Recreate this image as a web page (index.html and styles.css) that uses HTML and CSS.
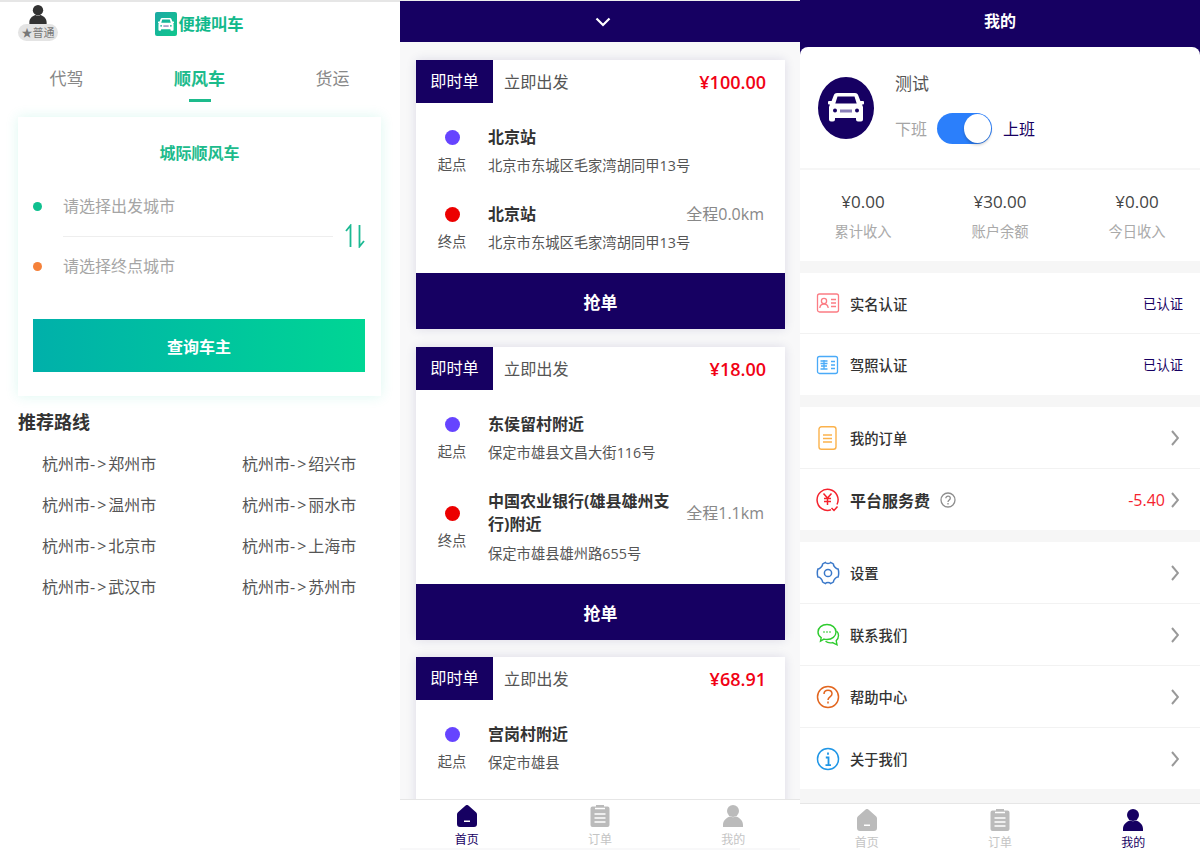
FILE: index.html
```html
<!DOCTYPE html>
<html lang="zh-CN">
<head>
  <meta charset="UTF-8" />
  <meta name="viewport" content="width=device-width, initial-scale=1.0"/>
  <title>便捷叫车</title>
  <link rel="stylesheet" href="styles.css">
</head>
<body>

  <svg class="defs" width="0" height="0">
    <symbol id="i-home" viewBox="0 0 20 22">
      <path d="M8.6 .6a2 2 0 0 1 2.8 0l7.6 6.6a3 3 0 0 1 1 2.2V19a3 3 0 0 1-3 3H3a3 3 0 0 1-3-3V9.400a3 3 0 0 1 1-2.200z"/>
      <rect x="7" y="15.500" width="6" height="1.500" fill="#fff"/>
    </symbol>
    <symbol id="i-list" viewBox="0 0 20 22">
      <path d="M6 1.500V0h8v1.500h3.500A2 2 0 0 1 19.500 3.500V20a2 2 0 0 1-2 2h-15a2 2 0 0 1-2-2V3.500a2 2 0 0 1 2-2z"/>
      <path d="M5 3.500h10M4.500 9h11M4.500 13h11M4.500 17h11" stroke="#fff" stroke-width="1.600" fill="none"/>
    </symbol>
    <symbol id="i-user" viewBox="0 0 20 22">
      <circle cx="10" cy="6" r="6"/>
      <path d="M7 11.500C3 13 0 15.500 0 20v2h20v-2c0-4.500-3-7-7-8.500-1.800 1-4.200 1-6 0z"/>
    </symbol>
    <symbol id="i-chevron" viewBox="0 0 8 16">
      <path d="M1 1l6 7-6 7" fill="none" stroke="currentColor" stroke-width="2"/>
    </symbol>
    <symbol id="i-car" viewBox="0 0 36 29">
      <path fill-rule="evenodd" d="M9 0h18c1.500 0 2.600.8 3.200 2.300L32.400 8H35a1 1 0 0 1 1 1v1.500a1 1 0 0 1-1 1h-1l1 2.500v12.500a2 2 0 0 1-2 2h-3a2 2 0 0 1-2-2V25H7v1.500a2 2 0 0 1-2 2H3a2 2 0 0 1-2-2V14l1-2.500H1a1 1 0 0 1-1-1V9a1 1 0 0 1 1-1h2.600l2.200-5.700C6.400.8 7.500 0 9 0zM9.500 3.500L7.300 10.500h21.400L26.500 3.500zM7 15.500a2 2 0 1 0 0 4 2 2 0 0 0 0-4zm22 0a2 2 0 1 0 0 4 2 2 0 0 0 0-4z"/>
      <rect x="12" y="16.500" width="12" height="3" fill="#8a80b8"/>
    </symbol>
  </svg>

  <main class="board">

    <!-- 首页 -->
    <section class="screen screen-home">
      <header class="home-top">
        <div class="member">
          <svg class="member-icon"><use href="#i-user"/></svg>
          <span class="member-badge">★普通</span>
        </div>
        <div class="logo">
          <span class="logo-mark"><svg width="16" height="13"><use href="#i-car"/></svg></span>
          便捷叫车
        </div>
      </header>

      <nav class="tabs">
        <a href="#">代驾</a>
        <a href="#" class="active">顺风车</a>
        <a href="#">货运</a>
      </nav>

      <div class="search-card">
        <h2>城际顺风车</h2>
        <div class="search-fields">
          <div class="fields">
            <div class="field"><i class="dot-start"></i><span>请选择出发城市</span></div>
            <div class="field"><i class="dot-end"></i><span>请选择终点城市</span></div>
          </div>
          <svg class="swap" width="20" height="24" viewBox="0 0 20 24">
            <path d="M1 7l4.500-5.500V23M19 17l-4.500 5.500V1" fill="none" stroke="#1cb993" stroke-width="1.800"/>
          </svg>
        </div>
        <button class="search-btn">查询车主</button>
      </div>

      <h3 class="routes-title">推荐路线</h3>
      <div class="routes">
        <span>杭州市<i>-&gt;</i>郑州市</span><span>杭州市<i>-&gt;</i>绍兴市</span>
        <span>杭州市<i>-&gt;</i>温州市</span><span>杭州市<i>-&gt;</i>丽水市</span>
        <span>杭州市<i>-&gt;</i>北京市</span><span>杭州市<i>-&gt;</i>上海市</span>
        <span>杭州市<i>-&gt;</i>武汉市</span><span>杭州市<i>-&gt;</i>苏州市</span>
      </div>
    </section>

    <!-- 订单大厅 -->
    <section class="screen screen-orders">
      <header class="orders-top">
        <svg width="16" height="10" viewBox="0 0 16 10"><path d="M1.500 1.500L8 8l6.500-6.500" fill="none" stroke="#fff" stroke-width="2.200"/></svg>
      </header>

      <div class="order-list">
        <article class="order">
          <div class="order-head">
            <span class="order-tag">即时单</span>
            <span class="order-when">立即出发</span>
            <span class="order-price">¥100.00</span>
          </div>
          <div class="order-stops">
            <div class="stop">
              <div class="stop-mark"><i class="mark-start"></i>起点</div>
              <div class="stop-info">
                <div class="stop-line"><b>北京站</b></div>
                <p>北京市东城区毛家湾胡同甲13号</p>
              </div>
            </div>
            <div class="stop">
              <div class="stop-mark"><i class="mark-end"></i>终点</div>
              <div class="stop-info">
                <div class="stop-line"><b>北京站</b><em>全程0.0km</em></div>
                <p>北京市东城区毛家湾胡同甲13号</p>
              </div>
            </div>
          </div>
          <button class="grab-btn">抢单</button>
        </article>

        <article class="order">
          <div class="order-head">
            <span class="order-tag">即时单</span>
            <span class="order-when">立即出发</span>
            <span class="order-price">¥18.00</span>
          </div>
          <div class="order-stops">
            <div class="stop">
              <div class="stop-mark"><i class="mark-start"></i>起点</div>
              <div class="stop-info">
                <div class="stop-line"><b>东侯留村附近</b></div>
                <p>保定市雄县文昌大街116号</p>
              </div>
            </div>
            <div class="stop">
              <div class="stop-mark"><i class="mark-end"></i>终点</div>
              <div class="stop-info">
                <div class="stop-line"><b>中国农业银行(雄县雄州支行)附近</b><em>全程1.1km</em></div>
                <p class="addr-low">保定市雄县雄州路655号</p>
              </div>
            </div>
          </div>
          <button class="grab-btn">抢单</button>
        </article>

        <article class="order order-last">
          <div class="order-head">
            <span class="order-tag">即时单</span>
            <span class="order-when">立即出发</span>
            <span class="order-price">¥68.91</span>
          </div>
          <div class="order-stops">
            <div class="stop">
              <div class="stop-mark"><i class="mark-start"></i>起点</div>
              <div class="stop-info">
                <div class="stop-line"><b>宫岗村附近</b></div>
                <p>保定市雄县</p>
              </div>
            </div>
          </div>
        </article>
      </div>

      <nav class="tabbar">
        <a href="#" class="on"><svg><use href="#i-home"/></svg>首页</a>
        <a href="#"><svg><use href="#i-list"/></svg>订单</a>
        <a href="#"><svg><use href="#i-user"/></svg>我的</a>
      </nav>
    </section>

    <!-- 我的 -->
    <section class="screen screen-me">
      <div class="me-top">
        <h1>我的</h1>
        <div class="profile">
          <div class="avatar"><svg width="36" height="29"><use href="#i-car"/></svg></div>
          <div class="profile-info">
            <div class="profile-name">测试</div>
            <div class="duty">
              <span>下班</span>
              <span class="toggle"><i></i></span>
              <span class="duty-on">上班</span>
            </div>
          </div>
        </div>
      </div>

      <div class="stats">
        <div><strong>¥0.00</strong><span>累计收入</span></div>
        <div><strong>¥30.00</strong><span>账户余额</span></div>
        <div><strong>¥0.00</strong><span>今日收入</span></div>
      </div>

      <div class="menu-group menu-verify">
        <a class="menu-row" href="#">
          <svg class="menu-icon" viewBox="0 0 24 24" fill="none" stroke="#fb7c84" stroke-width="1.300">
            <rect x="1.500" y="3" width="21" height="18" rx="2"/>
            <circle cx="8" cy="10" r="2.600"/>
            <path d="M3.800 17c.3-2.800 2-4 4.200-4s3.900 1.200 4.200 4M15 8.500h5M15 12h5M15 15.500h5"/>
          </svg>
          <span class="menu-label">实名认证</span>
          <span class="menu-state">已认证</span>
        </a>
        <a class="menu-row" href="#">
          <svg class="menu-icon" viewBox="0 0 24 24" fill="none" stroke="#4aaaf8" stroke-width="1.300">
            <rect x="1.500" y="3.500" width="20" height="17" rx="2"/>
            <path d="M4.500 8h7M4.500 10.500h7M5 13h6M4.500 16h7M8 7v9M15 8.500h4M15 12h4M15 15.500h4"/>
          </svg>
          <span class="menu-label">驾照认证</span>
          <span class="menu-state">已认证</span>
        </a>
      </div>

      <div class="menu-group menu-money">
        <a class="menu-row" href="#">
          <svg class="menu-icon" viewBox="0 0 24 24" fill="none" stroke="#fbb24c" stroke-width="1.400">
            <rect x="3" y="0.800" width="17" height="22.500" rx="2.500"/>
            <path d="M7 9h9M7 12.500h9M7 16h9"/>
          </svg>
          <span class="menu-label">我的订单</span>
          <svg class="chevron"><use href="#i-chevron"/></svg>
        </a>
        <a class="menu-row" href="#">
          <svg class="menu-icon" viewBox="0 0 24 24" fill="none" stroke="#f5222d" stroke-width="1.500">
            <path d="M15 21.800A10.500 10.500 0 1 1 21 16.500"/>
            <path d="M7.500 5.500L11.500 10l4-4.500M11.500 10v7M8 10.500h7M8 13.500h7M15.500 20l2.500 2.500 3.500-4"/>
          </svg>
          <span class="menu-label menu-label-strong">平台服务费</span>
          <svg class="hint" viewBox="0 0 16 16" fill="none" stroke="#8e8e8e" stroke-width="1.300">
            <circle cx="8" cy="8" r="7"/>
            <path d="M5.800 6.300c0-3 4.500-2.900 4.500-.1 0 1.800-2.300 1.800-2.300 3.700M8 11v1.400"/>
          </svg>
          <span class="menu-fee">-5.40</span>
          <svg class="chevron chevron-near"><use href="#i-chevron"/></svg>
        </a>
      </div>

      <div class="menu-group menu-more">
        <a class="menu-row" href="#">
          <svg class="menu-icon" viewBox="0 0 24 24" fill="none" stroke="#3a78c9" stroke-width="1.500">
            <path d="M9.500 1.500c.8 1.400 4.200 1.400 5 0 1.100.3 2 .8 2.900 1.500-.2 2 2.800 5.300 4.700 5 .4 1.200.6 2.600.6 4s-.2 2.800-.6 4c-1.900-.3-4.900 3-4.700 5-.9.700-1.800 1.200-2.900 1.500-.8-1.400-4.200-1.400-5 0-1.100-.3-2-.8-2.900-1.500.2-2-2.800-5.300-4.700-5C1.500 14.800 1.300 13.400 1.300 12s.2-2.800.6-4c1.900.3 4.900-3 4.700-5 .9-.7 1.800-1.200 2.900-1.500z"/>
            <circle cx="12" cy="12" r="3.600"/>
          </svg>
          <span class="menu-label">设置</span>
          <svg class="chevron"><use href="#i-chevron"/></svg>
        </a>
        <a class="menu-row" href="#">
          <svg class="menu-icon" viewBox="0 0 24 24" fill="none" stroke="#2ecb2e" stroke-width="1.400">
            <path d="M11 1.500c5 0 9 3.200 9 7.500s-4 7.500-9 7.500c-1 0-2 0-3-.4l-3.500 2 .7-3.500C3 13.300 2 11.300 2 9c0-4.300 4-7.500 9-7.500z"/>
            <path d="M20.500 8c1.300 1.200 2 2.800 2 4.600 0 2.300-1 4-2.300 5.200l.8 4-4.500-2.200c-2.500.6-5 .2-7-1.300"/>
            <path d="M7.500 9h1M10.500 9h1M13.500 9h1" stroke-width="1.800"/>
          </svg>
          <span class="menu-label">联系我们</span>
          <svg class="chevron"><use href="#i-chevron"/></svg>
        </a>
        <a class="menu-row" href="#">
          <svg class="menu-icon" viewBox="0 0 24 24" fill="none" stroke="#e2661f" stroke-width="1.500">
            <circle cx="12" cy="12" r="10.500"/>
            <path d="M8 9c0-5.200 8-5 8-.2 0 3.200-4 3-4 6.200M12 16.500v2"/>
          </svg>
          <span class="menu-label">帮助中心</span>
          <svg class="chevron"><use href="#i-chevron"/></svg>
        </a>
        <a class="menu-row" href="#">
          <svg class="menu-icon" viewBox="0 0 24 24" fill="none" stroke="#1f96e6" stroke-width="1.500">
            <circle cx="12" cy="12" r="10.500"/>
            <path d="M12 5.500v2.200M9.800 10.500H12.500v7.500M9.500 18.200h5.500" stroke-width="1.800"/>
          </svg>
          <span class="menu-label">关于我们</span>
          <svg class="chevron"><use href="#i-chevron"/></svg>
        </a>
      </div>

      <nav class="tabbar">
        <a href="#"><svg><use href="#i-home"/></svg>首页</a>
        <a href="#"><svg><use href="#i-list"/></svg>订单</a>
        <a href="#" class="on"><svg><use href="#i-user"/></svg>我的</a>
      </nav>
    </section>

  </main>

</body>
</html>
```

FILE: styles.css
```css
* {
  box-sizing: border-box;
}
body {
  margin: 0;
  font-family: "Open Sans", "Noto Sans CJK SC", sans-serif;
  color: #333;
  background: #fff;
}
a {
  color: inherit;
  text-decoration: none;
}
h1, h2, h3, p {
  margin: 0;
}
em, i {
  font-style: normal;
}
button {
  display: block;
  border: none;
  color: white;
  font-family: inherit;
  font-weight: 700;
}
.defs {
  position: absolute;
}
.board {
  display: grid;
  grid-template-columns: repeat(3, 400px);
  height: 850px;
  overflow: hidden;
}
.screen {
  height: 850px;
  display: flex;
  flex-direction: column;
  overflow: hidden;
}

/* home */
.screen-home {
  border-top: 2px solid #e6e6e6;
}
.home-top {
  display: flex;
  justify-content: center;
  position: relative;
  height: 52px;
  padding: 10px 1px 0 0;
}
.member {
  position: absolute;
  left: 18px;
  top: 3px;
  display: flex;
  flex-direction: column;
  align-items: center;
}
.member-icon {
  width: 18px;
  height: 19px;
  fill: #333;
}
.member-badge {
  width: 40px;
  height: 17px;
  line-height: 17px;
  text-align: center;
  font-size: 11px;
  color: #777;
  background: #e4e4e4;
  border-radius: 9px;
}
.logo {
  display: flex;
  align-items: flex-start;
  font-size: 16.300px;
  line-height: 24px;
  font-weight: 700;
  color: #12b98c;
}
.logo-mark {
  display: flex;
  align-items: center;
  justify-content: center;
  width: 22px;
  height: 24px;
  margin-right: 1px;
  fill: white;
  background: linear-gradient(135deg, #1ca9a4, #0fc78c);
  border-radius: 2px;
}
.tabs {
  display: grid;
  grid-template-columns: repeat(3, 1fr);
  margin-top: 13px;
  padding: 0 1px 26px 0;
  text-align: center;
  font-size: 17px;
  line-height: 24px;
  color: #888;
}
.tabs .active {
  color: #1dbb8c;
  font-weight: 700;
}
.tabs .active::after {
  content: "";
  display: block;
  width: 22px;
  height: 3px;
  margin: 8px auto -11px;
  background: #1dbb8c;
}
.search-card {
  width: 363px;
  height: 279px;
  margin-left: 18px;
  padding: 24px 15px 0;
  box-shadow: 0 0 12px rgba(40, 210, 170, 0.16);
}
.search-card h2 {
  text-align: center;
  font-size: 16px;
  line-height: 24px;
  color: #1dbb8c;
}
.search-fields {
  display: flex;
  align-items: center;
  margin-top: 11px;
}
.fields {
  width: 300px;
}
.field {
  display: flex;
  align-items: center;
  height: 60px;
  font-size: 16px;
  color: #a5a5a5;
}
.field span {
  flex: 1;
  line-height: 60px;
  margin-left: 21px;
}
.field:first-child span {
  border-bottom: 1px solid #eee;
}
.field i {
  width: 9px;
  height: 9px;
  border-radius: 50%;
}
.dot-start {
  background: #0fc08f;
}
.dot-end {
  background: #f5813a;
}
.swap {
  margin-left: 12px;
}
.search-btn {
  width: 332px;
  height: 53px;
  margin-top: 23px;
  font-size: 16px;
  background: linear-gradient(90deg, #00b0aa, #00d694);
}
.routes-title {
  margin: 14px 0 0 18px;
  font-size: 18px;
  line-height: 24px;
}
.routes {
  display: grid;
  grid-template-columns: 200px 1fr;
  grid-auto-rows: 41px;
  margin-top: 10px;
  padding-left: 42px;
  font-size: 16px;
  line-height: 41px;
  color: #555;
}
.routes i {
  letter-spacing: 2px;
}

/* order hall */
.screen-orders {
  border-top: 1px solid #eee;
  background: #f8f8f9;
}
.orders-top {
  flex: none;
  display: flex;
  align-items: center;
  justify-content: center;
  height: 41px;
  padding-left: 6px;
  background: #160062;
}
.order-list {
  flex: 1;
  min-height: 0;
  overflow: hidden;
  padding: 18px 15px 0 16px;
}
.order {
  margin-bottom: 18px;
  background: white;
  box-shadow: 0 0 10px rgba(22, 0, 98, 0.12);
}
.order-last {
  min-height: 200px;
  margin-top: -1px;
}
.order-head {
  display: flex;
  align-items: center;
  height: 43px;
  font-size: 16.200px;
}
.order-tag {
  width: 77px;
  line-height: 43px;
  text-align: center;
  color: white;
  background: #160062;
}
.order-when {
  margin-left: 11px;
  margin-top: -2px;
  color: #555;
}
.order-price {
  margin-left: auto;
  margin-right: 19px;
  font-size: 18px;
  font-weight: 600;
  color: #f10215;
}
.order-stops {
  display: flex;
  flex-direction: column;
  gap: 26px;
  padding: 23px 21px 19px 0;
}
.stop {
  display: flex;
  align-items: center;
}
.stop-mark {
  flex: none;
  display: flex;
  flex-direction: column;
  align-items: center;
  gap: 10px;
  width: 72px;
  padding-top: 2px;
  font-size: 14.300px;
  line-height: 20px;
  color: #555;
}
.stop-mark i {
  width: 15px;
  height: 15px;
  border-radius: 50%;
}
.mark-start {
  background: #6644ff;
}
.mark-end {
  background: #ec0000;
}
.stop-info {
  flex: 1;
}
.stop-line {
  display: flex;
  align-items: center;
  justify-content: space-between;
  line-height: 23px;
  font-size: 16px;
}
.stop-line b {
  max-width: 186px;
}
.stop-line em {
  flex: none;
  color: #888;
}
.stop-info p {
  margin-top: 5px;
  font-size: 14.300px;
  line-height: 23px;
  color: #555;
}
.stop-info .addr-low {
  margin-top: 6px;
}
.grab-btn {
  width: 100%;
  height: 56px;
  font-size: 17px;
  background: #160062;
}

/* me */
.screen-me {
  background: #f6f6f6;
}
.me-top {
  background: #160062;
}
.me-top h1 {
  height: 47px;
  padding-top: 9px;
  text-align: center;
  font-size: 16px;
  line-height: 24px;
  color: white;
}
.profile {
  display: flex;
  align-items: center;
  gap: 21px;
  height: 121px;
  padding-left: 18px;
  background: white;
  border-radius: 8px 8px 0 0;
}
.avatar {
  display: flex;
  align-items: center;
  justify-content: center;
  width: 56px;
  height: 62px;
  fill: white;
  background: #160062;
  border-radius: 50%;
}
.profile-name {
  font-size: 17px;
  line-height: 24px;
  color: #555;
}
.duty {
  display: flex;
  align-items: center;
  gap: 10px;
  margin-top: 17px;
  font-size: 16px;
  color: #a5a5a5;
}
.toggle {
  display: flex;
  justify-content: flex-end;
  width: 55px;
  height: 31px;
  padding: 1px;
  background: #2b7ffb;
  border-radius: 16px;
}
.toggle i {
  width: 27px;
  height: 29px;
  background: white;
  border-radius: 50%;
  box-shadow: 0 2px 3px rgba(0, 0, 0, 0.2);
}
.duty-on {
  margin-left: 1px;
  color: #160062;
}
.stats {
  display: grid;
  grid-template-columns: repeat(3, 137px);
  justify-content: center;
  height: 93px;
  padding-top: 20px;
  text-align: center;
  background: white;
  border-top: 2px solid #f6f6f6;
}
.stats strong {
  display: block;
  font-size: 17px;
  font-weight: 400;
  line-height: 24px;
  color: #444;
}
.stats span {
  display: block;
  margin-top: 6px;
  font-size: 14.300px;
  line-height: 24px;
  color: #aaa;
}
.menu-group {
  margin-top: 12px;
  background: white;
}
.menu-row {
  display: flex;
  align-items: center;
  height: 62px;
  padding: 0 21px 0 16px;
  border-bottom: 1px solid #f2f2f2;
}
.menu-row:last-child {
  height: 61px;
  border-bottom: none;
}
.menu-verify .menu-row {
  height: 61px;
}
.menu-icon {
  flex: none;
  width: 24px;
  height: 24px;
}
.menu-label {
  margin-left: 10px;
  font-size: 14.300px;
  font-weight: 500;
  color: #333;
}
.menu-label-strong {
  font-size: 16px;
  font-weight: 700;
}
.hint {
  width: 16px;
  height: 16px;
  margin-left: 10px;
}
.menu-state {
  margin-left: auto;
  margin-right: -4px;
  font-size: 13.300px;
  color: #160062;
}
.menu-fee {
  margin-left: auto;
  font-size: 16px;
  color: #f5222d;
}
.chevron {
  width: 8px;
  height: 16px;
  margin-left: auto;
  color: #999;
}
.chevron-near {
  margin-left: 6px;
}

/* bottom tabs */
.tabbar {
  flex: none;
  display: grid;
  grid-template-columns: repeat(3, 1fr);
  margin-top: auto;
  height: 49px;
  padding-top: 5px;
  background: white;
  border-top: 1px solid #e6e6e6;
  text-align: center;
  font-size: 12px;
  line-height: 17px;
  color: #c4c4c4;
}
.screen-orders .tabbar {
  margin-bottom: 2px;
}
.screen-me .tabbar {
  height: 47px;
  line-height: 12px;
}
.tabbar svg {
  display: block;
  width: 20px;
  height: 22px;
  margin: 0 auto 4px;
  fill: #bbb;
}
.screen-me .tabbar svg {
  margin-bottom: 6px;
}
.tabbar .on {
  color: #160062;
}
.tabbar .on svg {
  fill: #160062;
}
```
